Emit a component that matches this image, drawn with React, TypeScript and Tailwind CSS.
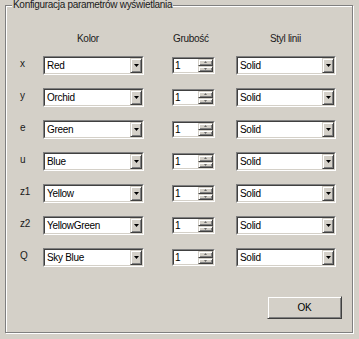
import React from "react";

const rows = [
  { label: "x", color: "Red" },
  { label: "y", color: "Orchid" },
  { label: "e", color: "Green" },
  { label: "u", color: "Blue" },
  { label: "z1", color: "Yellow" },
  { label: "z2", color: "YellowGreen" },
  { label: "Q", color: "Sky Blue" },
];

// classic raised 3d button face
const raised =
  "bg-[#d4d0c8] border border-t-[#d4d0c8] border-l-[#d4d0c8] border-b-[#404040] border-r-[#404040] shadow-[inset_1px_1px_0_#fff,inset_-1px_-1px_0_#808080]";

function Sunken({ className, children }: { className: string; children: React.ReactNode }) {
  return (
    <div className={`${className} flex border border-t-[#808080] border-l-[#808080] border-b-white border-r-white`}>
      <div className="flex-1 flex min-w-0 border border-t-[#404040] border-l-[#404040] border-b-[#d4d0c8] border-r-[#d4d0c8] bg-white">
        {children}
      </div>
    </div>
  );
}

function Combo({ value, width }: { value: string; width: string }) {
  return (
    <Sunken className={`${width} h-[19px]`}>
      <span className="flex-1 pl-[2px] leading-[15px] text-black">{value}</span>
      <div className={`${raised} w-[12px] flex items-center justify-center`}>
        <svg width="5" height="3" viewBox="0 0 5 3">
          <path d="M0 0h5L2.5 3z" fill="#000" />
        </svg>
      </div>
    </Sunken>
  );
}

function Spin() {
  return (
    <Sunken className="w-[43px] h-[17px]">
      <span className="flex-1 pl-[1px] leading-[13px] text-black">1</span>
      <div className="w-[15px] flex flex-col">
        <div className={`${raised} flex-1 flex items-center justify-center`}>
          <svg width="3" height="2" viewBox="0 0 3 2">
            <path d="M1.5 0L3 2H0z" fill="#6a6a6a" />
          </svg>
        </div>
        <div className={`${raised} flex-1 flex items-center justify-center`}>
          <svg width="3" height="2" viewBox="0 0 3 2">
            <path d="M0 0h3L1.5 2z" fill="#6a6a6a" />
          </svg>
        </div>
      </div>
    </Sunken>
  );
}

export default function App() {
  return (
    <div className="w-[359px] h-[339px] bg-[#d4d0c8] pt-[5px] pl-[5px] font-['Liberation_Sans',Arial,sans-serif] text-[10px] tracking-[-0.3px] text-[#1a1a1a]">
      {/* group box */}
      <div className="relative w-[348px] h-[328px] border border-[#808080] shadow-[inset_1px_1px_0_#fff,1px_1px_0_#fff]">
        <span className="absolute left-[6px] -top-[7px] px-[1px] bg-[#d4d0c8] leading-[12px]">
          Konfiguracja parametrów wyświetlania
        </span>

        <div className="pt-[27px] flex h-[12px] box-content leading-[12px]">
          <span className="ml-[71px] w-[60px]">Kolor</span>
          <span className="ml-[36px] w-[60px]">Grubość</span>
          <span className="ml-[37px]">Styl linii</span>
        </div>

        <div className="mt-[11px] flex flex-col gap-[13px]">
          {rows.map((r) => (
            <div key={r.label} className="flex items-center h-[19px]">
              <span className="w-[37px] pl-[14px] -mt-[4px]">{r.label}</span>
              <Combo value={r.color} width="w-[101px]" />
              <div className="ml-[28px]">
                <Spin />
              </div>
              <div className="ml-[21px]">
                <Combo value="Solid" width="w-[100px]" />
              </div>
            </div>
          ))}
        </div>

        <div className="mt-[29px] flex justify-end pr-[10px]">
          <button className={`${raised} w-[75px] h-[23px] text-[10px] text-black`}>OK</button>
        </div>
      </div>
    </div>
  );
}
